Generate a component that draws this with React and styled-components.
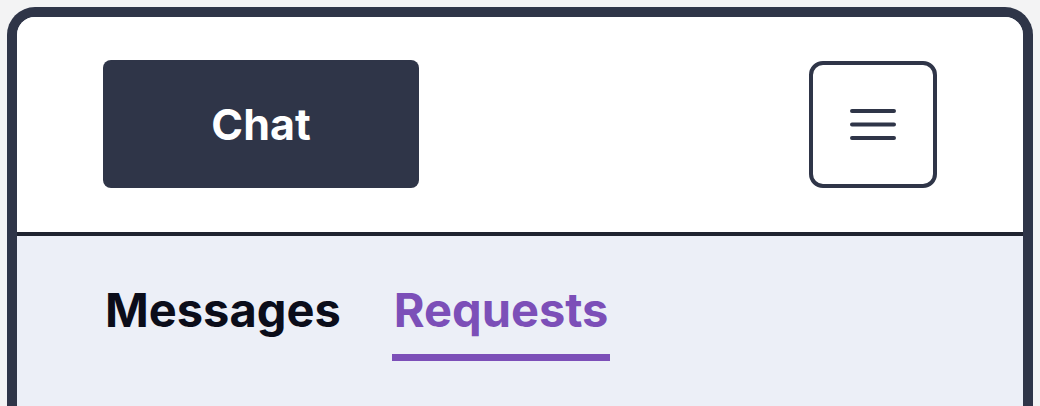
import React from 'react';
import { useState } from 'react';

// CSS
import styled, { createGlobalStyle } from 'styled-components';

const GlobalStyle = createGlobalStyle`
  html, body {
    margin: 0;
    padding: 0;
    background: #f3f3f4;
    font-family: Inter, "Noto Sans", sans-serif;
    overflow: hidden;
  }
`;

function App() {
  // active tab
  const [tab, setTab] = useState('requests');

  return (
    <Page>
      <GlobalStyle />
      <Frame>
        <Header>
          <ChatBtn>Chat</ChatBtn>
          <MenuBtn aria-label="menu">
            <svg width="48" height="34" viewBox="0 0 48 34" fill="none">
              <path
                d="M3 4h42M3 17.5h42M3 31h42"
                stroke="#2f3548"
                strokeWidth="4"
                strokeLinecap="round"
              />
            </svg>
          </MenuBtn>
        </Header>
        <Body>
          <Tabs>
            <Tab $active={tab === 'messages'} onClick={() => setTab('messages')}>
              Messages
            </Tab>
            <Tab $active={tab === 'requests'} onClick={() => setTab('requests')}>
              Requests
            </Tab>
          </Tabs>
        </Body>
      </Frame>
    </Page>
  );
}

export default App;

const Page = styled.div`
  padding: 7px 7px 0;
`;

const Frame = styled.div`
  border: 10px solid #2f3548;
  border-bottom: none;
  border-radius: 28px 28px 0 0;
  overflow: hidden;
  background: #eceff7;
  min-height: 460px;
`;

const Header = styled.div`
  display: flex;
  align-items: center;
  justify-content: space-between;
  background: #fff;
  padding: 43px 86px 44px;
  border-bottom: 4px solid #1f2330;
`;

const ChatBtn = styled.button`
  width: 316px;
  height: 128px;
  border: none;
  border-radius: 8px;
  background: #2f3548;
  color: #fff;
  font-family: Inter, "Noto Sans", sans-serif;
  font-size: 43px;
  font-weight: 700;
  cursor: pointer;
`;

const MenuBtn = styled.button`
  width: 128px;
  height: 127px;
  border: 4px solid #2f3548;
  border-radius: 14px;
  background: #fff;
  display: flex;
  align-items: center;
  justify-content: center;
  padding: 0;
  cursor: pointer;
`;

const Body = styled.div`
  padding: 45px 86px 0;
`;

const Tabs = styled.div`
  display: flex;
  gap: 49px;
`;

const Tab = styled.div`
  font-size: 47px;
  font-weight: 700;
  line-height: 58px;
  padding: 0 2px 15px;
  color: ${(p) => (p.$active ? '#7c4fb8' : '#0b0d1a')};
  border-bottom: 7px solid ${(p) => (p.$active ? '#7c4fb8' : 'transparent')};
  cursor: pointer;
`;
